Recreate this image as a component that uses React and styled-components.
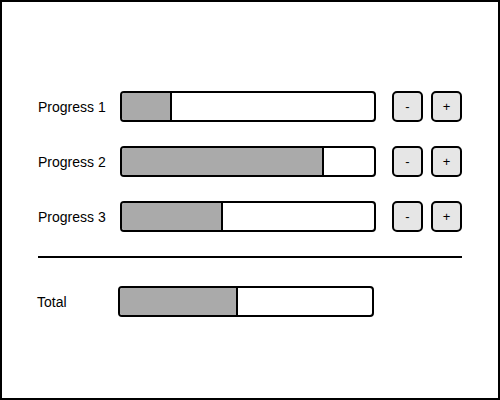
import React, { useState } from "react";
import styled, { createGlobalStyle } from "styled-components";

const GlobalStyle = createGlobalStyle`
  body {
    margin: 0;
    font-family: "Liberation Sans", Arial, sans-serif;
    color: #000;
  }
`;

function ProgressBar({ value }) {
  return (
    <Track>
      <Fill style={{ width: `${value}%` }} />
    </Track>
  );
}

export default function App() {
  const [values, setValues] = useState([20, 80, 40]);

  const change = (index, delta) => {
    setValues((prev) =>
      prev.map((v, i) =>
        i === index ? Math.min(100, Math.max(0, v + delta)) : v
      )
    );
  };

  const total = values.reduce((sum, v) => sum + v, 0) / values.length;

  return (
    <Frame>
      <GlobalStyle />
      <Rows>
        {values.map((value, i) => (
          <Row key={i}>
            <Label>Progress {i + 1}</Label>
            <ProgressBar value={value} />
            <Buttons>
              <StepButton onClick={() => change(i, -10)}>-</StepButton>
              <StepButton onClick={() => change(i, 10)}>+</StepButton>
            </Buttons>
          </Row>
        ))}
      </Rows>
      <Divider />
      <Row $offset={-1}>
        <Label $width={81}>Total</Label>
        <ProgressBar value={total} />
      </Row>
    </Frame>
  );
}

const Frame = styled.div`
  box-sizing: border-box;
  width: 500px;
  height: 400px;
  border: 2px solid #000;
  padding: 89px 36px 0 36px;
  display: flex;
  flex-direction: column;
`;

const Rows = styled.div`
  display: flex;
  flex-direction: column;
  gap: 24px;
`;

const Row = styled.div`
  display: flex;
  align-items: center;
  height: 31px;
  margin-left: ${(p) => p.$offset || 0}px;
`;

const Label = styled.span`
  width: ${(p) => p.$width || 82}px;
  flex-shrink: 0;
  font-size: 14px;
`;

const Track = styled.div`
  box-sizing: border-box;
  width: 256px;
  height: 31px;
  border: 2px solid #000;
  border-radius: 4px;
  background: #fff;
  overflow: hidden;
  display: flex;
`;

const Fill = styled.div`
  box-sizing: border-box;
  height: 100%;
  background: #aaaaaa;
  border-right: 2px solid #000;
`;

const Buttons = styled.div`
  display: flex;
  gap: 8px;
  margin-left: 16px;
`;

const StepButton = styled.button`
  box-sizing: border-box;
  width: 31px;
  height: 31px;
  padding: 0;
  border: 2px solid #000;
  border-radius: 5px;
  background: #e6e6e6;
  font-family: "Liberation Sans", Arial, sans-serif;
  font-size: 13px;
  color: #000;
  cursor: pointer;
`;

const Divider = styled.hr`
  width: 424px;
  margin: 24px 0 28px;
  border: none;
  border-top: 2px solid #000;
`;
